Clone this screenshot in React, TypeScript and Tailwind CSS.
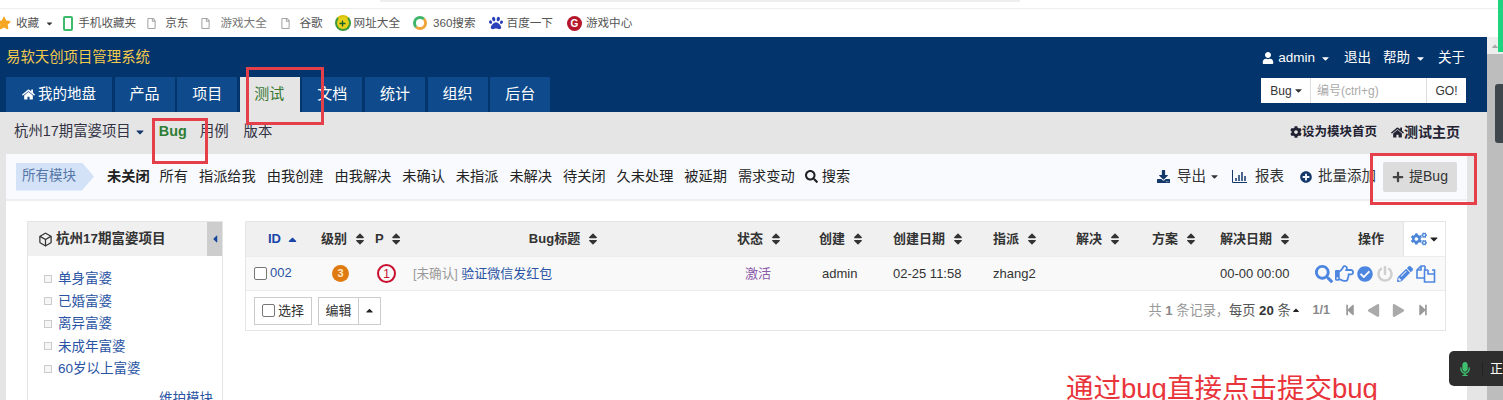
import {
  FaCaretDown,
  FaCaretUp,
  FaCaretLeft,
  FaCheckCircle,
  FaCog,
  FaCogs,
  FaDownload,
  FaHome,
  FaPencilAlt,
  FaPlay,
  FaPlus,
  FaPlusCircle,
  FaPowerOff,
  FaRegFile,
  FaRegHandPointRight,
  FaSearch,
  FaSort,
  FaStar,
  FaStepBackward,
  FaStepForward,
  FaUser,
  FaPaw,
  FaMicrophone,
} from 'react-icons/fa'
import { FiBox } from 'react-icons/fi'

const tabs = ['产品', '项目', '测试', '文档', '统计', '组织', '后台']

const filters = ['所有', '指派给我', '由我创建', '由我解决', '未确认', '未指派', '未解决', '待关闭', '久未处理', '被延期', '需求变动']

const modules = ['单身富婆', '已婚富婆', '离异富婆', '未成年富婆', '60岁以上富婆']

const gridCols = 'grid grid-cols-[67px_54px_35px_323px_82px_74px_100px_83px_76px_68px_102px_93px_42px]'

const headCols = [
  { label: '级别', cls: 'pl-[8px]' },
  { label: 'P', cls: 'pl-[8px]' },
  { label: 'Bug标题', cls: 'justify-center pl-[2px]' },
  { label: '状态', cls: 'pl-[12px]' },
  { label: '创建', cls: 'pl-[12px]' },
  { label: '创建日期', cls: 'pl-[12px]' },
  { label: '指派', cls: 'pl-[12px]' },
  { label: '解决', cls: 'pl-[12px]' },
  { label: '方案', cls: 'pl-[12px]' },
  { label: '解决日期', cls: 'pl-[12px]' },
]

function Page() {
  return <FaRegFile className="text-[11px] text-[#a5a5a5]" />
}

function Bookmarks() {
  return (
    <div className="flex h-[28px] items-center whitespace-nowrap bg-white text-[11.6px] text-[#555]">
      <FaStar className="ml-[-3px] text-[14px] text-[#f5a623]" />
      <span className="ml-[5px]">收藏</span>
      <FaCaretDown className="ml-[6px] text-[9px] text-[#333]" />
      <span className="ml-[9px] h-[15px] w-[10px] rounded-[2px] border-2 border-[#3dbb6c]" />
      <span className="ml-[5px]">手机收藏夹</span>
      <span className="ml-[10px] flex"><Page /></span>
      <span className="ml-[8px]">京东</span>
      <span className="ml-[12px] flex"><Page /></span>
      <span className="ml-[9px] w-[47px] text-[#777]">游戏大全</span>
      <span className="ml-[13px] flex"><Page /></span>
      <span className="ml-[8px]">谷歌</span>
      <span className="ml-[12px] flex h-[16px] w-[16px] items-center justify-center rounded-full border-2 border-[#3c9a3c] border-t-[#d9c20c] bg-[#e8cf1a] text-[#14602a]">
        <FaPlus className="text-[7px]" />
      </span>
      <span className="ml-[3px]">网址大全</span>
      <span className="ml-[13px] h-[14px] w-[14px] rounded-full border-[3px] border-[#3fb56a] border-r-[#f2a33a] border-b-[#f2a33a]" />
      <span className="ml-[6px]">360搜索</span>
      <FaPaw className="ml-[13px] text-[14px] text-[#2a3fb8]" />
      <span className="ml-[4px]">百度一下</span>
      <span className="ml-[14px] flex h-[15px] w-[15px] items-center justify-center rounded-full bg-[#b5162b] text-[10px] font-bold text-white">G</span>
      <span className="ml-[4px]">游戏中心</span>
    </div>
  )
}

function Header() {
  return (
    <div className="flex h-[75px] justify-between bg-[#03346b] pl-[6px]">
      <div className="flex flex-col justify-between">
        <div className="pt-[11px] text-[14.4px] leading-[18px] text-[#f2c94c]">易软天创项目管理系统</div>
        <div className="flex gap-[2.6px] text-[15px] text-white">
          <div className="flex h-[35px] w-[106px] items-center justify-center gap-[3px] bg-[#0f4b8c] text-[14.5px]">
            <FaHome className="text-[13px]" />
            <span>我的地盘</span>
          </div>
          {tabs.map((tab) =>
            tab === '测试' ? (
              <div key={tab} className="flex h-[35px] w-[60px] items-center justify-center bg-[#e5e5e5] pr-[1px] text-[#35782f]">
                {tab}
              </div>
            ) : (
              <div key={tab} className="flex h-[35px] w-[60px] items-center justify-center bg-[#0f4b8c]">
                {tab}
              </div>
            ),
          )}
        </div>
      </div>
      <div className="flex flex-col items-end pr-[21px] pt-[11px]">
        <div className="mr-[1px] flex h-[20px] items-center text-[13.5px] text-white">
          <FaUser className="text-[12px]" />
          <span className="ml-[4px]">admin</span>
          <FaCaretDown className="ml-[5px] text-[11px]" />
          <span className="ml-[13px]">退出</span>
          <span className="ml-[12px]">帮助</span>
          <FaCaretDown className="ml-[5px] text-[11px]" />
          <span className="ml-[12px]">关于</span>
        </div>
        <div className="mt-[10px] flex h-[25px] w-[205px] items-center bg-white text-[12px] text-[#333]">
          <div className="flex h-full w-[50px] items-center justify-center gap-[1px] border-r border-[#ddd] pl-[3px]">
            Bug<FaCaretDown className="text-[11px]" />
          </div>
          <div className="flex h-full w-[115px] items-center pl-[6px] text-[#aaa]">编号(ctrl+g)</div>
          <div className="flex h-full w-[40px] items-center justify-center border-l border-[#ddd]">GO!</div>
        </div>
      </div>
    </div>
  )
}

function SubNav() {
  return (
    <div className="flex h-[42px] items-center justify-between bg-[#e5e5e5] pb-[2px] pl-[14px] pr-[27px] text-[#334]">
      <div className="flex items-center text-[14.4px]">
        <span>杭州17期富婆项目</span>
        <FaCaretDown className="ml-[3px] text-[12px] text-[#14386a]" />
        <span className="ml-[13px] font-bold text-[#2e7d32]">Bug</span>
        <span className="ml-[13px]">用例</span>
        <span className="ml-[15px]">版本</span>
      </div>
      <div className="flex items-center font-bold text-[#223]">
        <FaCog className="text-[12px]" />
        <span className="text-[12.5px]">设为模块首页</span>
        <FaHome className="ml-[14px] text-[13px]" />
        <span className="text-[14px]">测试主页</span>
      </div>
    </div>
  )
}

function FeatureBar() {
  return (
    <div className="flex h-[47px] items-center justify-between border-b-2 border-[#eceef2] bg-[#f8fafe] pl-[10px] pr-[10px]">
      <div className="flex items-center text-[14.2px] text-[#222]">
        <div className="flex h-[28px] w-[78px] items-center bg-[#d3e2f6] pl-[6px] text-[13.5px] text-[#5577a8] [clip-path:polygon(0_0,66px_0,100%_50%,66px_100%,0_100%)]">
          所有模块
        </div>
        <span className="ml-[13px] font-bold">未关闭</span>
        <div className="ml-[10px] flex gap-[11px]">
          {filters.map((item) => (
            <span key={item}>{item}</span>
          ))}
        </div>
        <FaSearch className="ml-[10px] text-[13px]" />
        <span className="ml-[4px]">搜索</span>
      </div>
      <div className="flex items-center text-[14.5px] text-[#333]">
        <FaDownload className="text-[13px] text-[#14386a]" />
        <span className="ml-[7px]">导出</span>
        <FaCaretDown className="ml-[3px] text-[11px]" />
        <svg className="ml-[12px]" width="15" height="13" viewBox="0 0 15 13" fill="none" stroke="#14386a">
          <path d="M.5 0v12.5H15" />
          <path d="M4 11V8M7 11V5M10 11V2M13 11V6" strokeWidth="1.5" />
        </svg>
        <span className="ml-[8px]">报表</span>
        <FaPlusCircle className="ml-[16px] text-[12px] text-[#14386a]" />
        <span className="ml-[6px]">批量添加</span>
        <div className="ml-[7px] flex h-[30px] w-[74px] items-center justify-center gap-[5px] rounded-[2px] bg-[#dcdcdc] text-[14px]">
          <FaPlus className="text-[12px] text-[#444]" />
          <span>提Bug</span>
        </div>
      </div>
    </div>
  )
}

function Sidebar() {
  return (
    <div className="w-[196px] border border-[#e5e5e5] bg-white">
      <div className="flex h-[34px] items-center justify-between bg-[#f0f0f0]">
        <div className="flex items-center gap-[3px] pl-[10px] text-[13.5px] font-bold text-[#333]">
          <FiBox className="text-[15px] font-normal" />
          <span>杭州17期富婆项目</span>
        </div>
        <div className="flex h-full w-[15px] items-center justify-center bg-[#cdcdcd] text-[#14479c]">
          <FaCaretLeft className="text-[12px]" />
        </div>
      </div>
      <div className="flex flex-col gap-[5px] pl-[16px] pt-[14px] text-[13.5px] leading-[17.5px] text-[#2a54a3]">
        {modules.map((item) => (
          <div key={item} className="flex items-center gap-[6px]">
            <span className="h-[8px] w-[8px] border border-[#ccc] bg-[#f6f6f6]" />
            <span>{item}</span>
          </div>
        ))}
      </div>
      <div className="pr-[9px] pt-[11px] text-right text-[13.5px] text-[#2a54a3]">维护模块</div>
    </div>
  )
}

function BugTable() {
  return (
    <div className="h-[110px] w-[1201px] border border-[#e5e5e5] text-[13px] text-[#333]">
      <div className={`${gridCols} h-[34px] items-center bg-[#f0f0f0] font-bold`}>
        <div className="flex items-center gap-[5px] pl-[22px] text-[#1a44a8]">
          ID
          <FaCaretUp className="text-[13px]" />
        </div>
        {headCols.map((col) => (
          <div key={col.label} className={`flex items-center gap-[6px] ${col.cls}`}>
            {col.label}
            <FaSort className="text-[14px]" />
          </div>
        ))}
        <div className="pl-[48px]">操作</div>
        <div className="flex h-full items-center gap-[1px] border-l border-[#e5e5e5] bg-white pl-[7px]">
          <FaCogs className="text-[16px] text-[#4d86d8]" />
          <FaCaretDown className="text-[12px] text-[#222]" />
        </div>
      </div>
      <div className={`${gridCols} h-[35px] items-center border-y border-[#ececec] bg-[#f9f9f9]`}>
        <div className="flex items-center gap-[3px] pl-[8px] text-[#2a54a3]">
          <span className="h-[13px] w-[13px] rounded-[2px] border border-[#777] bg-white" />
          <span className="relative top-[-1px]">002</span>
        </div>
        <div className="pl-[19px]">
          <span className="flex h-[17px] w-[17px] items-center justify-center rounded-full bg-[#e07b12] text-[11px] font-bold text-[#ffe9c8]">3</span>
        </div>
        <div className="pl-[10px]">
          <span className="flex h-[19px] w-[19px] items-center justify-center rounded-full border-2 border-[#c8102e] text-[12px] text-[#c8102e]">1</span>
        </div>
        <div className="pl-[11px] text-[12.6px] text-[#999]">
          [未确认] <span className="text-[13px] text-[#2a54a3]">验证微信发红包</span>
        </div>
        <div className="pl-[20px] text-[#8a5aab]">激活</div>
        <div className="pl-[15px]">admin</div>
        <div className="pl-[12px]">02-25 11:58</div>
        <div className="pl-[12px]">zhang2</div>
        <div />
        <div />
        <div className="pl-[12px]">00-00 00:00</div>
        <div className="col-span-2 flex items-center pl-[5px] text-[#4d86e0]">
          <FaSearch className="text-[18px]" />
          <FaRegHandPointRight className="ml-[2px] text-[19px]" />
          <FaCheckCircle className="ml-[3px] text-[16px]" />
          <FaPowerOff className="ml-[4px] text-[16px] text-[#cfcfcf]" />
          <FaPencilAlt className="ml-[4px] text-[16px]" />
          <svg className="ml-[3px]" width="20" height="18" viewBox="0 0 20 18" fill="none" stroke="currentColor" strokeWidth="1.6">
            <path d="M9 1H5L1 5v8h7" />
            <path d="M5 1v4H1" />
            <path d="M12 5H8.5v12h10V5h-2.5" />
            <path d="M12 5v4h6.5" />
            <path d="M9 1v4" />
          </svg>
        </div>
      </div>
      <div className="flex h-[39px] items-center justify-between pl-[8px] pr-[16px]">
        <div className="flex items-center gap-[6px]">
          <div className="flex h-[28px] w-[58px] items-center justify-center gap-[3px] border border-[#ccc]">
            <span className="h-[13px] w-[13px] rounded-[2px] border border-[#777]" />
            选择
          </div>
          <div className="flex h-[28px] items-center border border-[#ccc]">
            <span className="flex h-full w-[40px] items-center justify-center border-r border-[#ccc]">编辑</span>
            <span className="flex w-[21px] justify-center"><FaCaretUp className="text-[11px] text-[#222]" /></span>
          </div>
        </div>
        <div className="flex items-center text-[13.2px] text-[#999]">
          <span>共 <b className="text-[#888]">1</b> 条记录，</span>
          <span className="text-[#555]">每页 <b className="text-[#333]">20</b> 条</span>
          <FaCaretUp className="text-[10px] text-[#222]" />
          <span className="ml-[12px] text-[12.5px] font-bold text-[#888]">1/1</span>
          <FaStepBackward className="ml-[14px] text-[12px] text-[#999]" />
          <FaPlay className="ml-[11px] text-[13px] text-[#aaa] [transform:scaleX(-1)]" />
          <FaPlay className="ml-[12px] text-[13px] text-[#aaa]" />
          <FaStepForward className="ml-[12px] text-[12px] text-[#999]" />
        </div>
      </div>
    </div>
  )
}

export default function App() {
  return (
    <div className="relative h-[400px] w-[1503px] overflow-hidden bg-white font-['Liberation_Sans','Noto_Sans_CJK_SC',sans-serif]">
      {/* browser chrome */}
      <div className="h-[9px] border-b border-[#eeeeee] bg-white">
        <div className="ml-[380px] h-[2px] w-[640px] bg-[#eeeeee]" />
      </div>
      <Bookmarks />

      <div className="flex h-[363px]">
        <div className="flex-1 bg-[#e5e5e5]">
          <Header />
          <SubNav />
          <div className="ml-[6px] mr-[20px] h-[246px] bg-white">
            <FeatureBar />
            <div className="flex gap-[22px] pl-[21px] pt-[20px]">
              <Sidebar />
              <BugTable />
            </div>
          </div>
        </div>
        <div className="w-[16px] bg-[#bdbdbd]">
          <div className="flex h-[17px] justify-center bg-[#eeeeee] pt-[4px]">
            <FaCaretUp className="text-[10px] text-[#aaa]" />
          </div>
        </div>
      </div>

      {/* overlays: scrollbar marks, annotations, voice widget */}
      <div className="absolute right-0 top-0 h-[52px] w-[5px] bg-[#1ed47e]" />
      <div className="absolute right-0 top-[84px] h-[59px] w-[8px] rounded-l-[3px] bg-[#3f474c]" />
      <div className="absolute left-[246px] top-[67px] h-[58px] w-[78px] border-[3px] border-[#e5404a]" />
      <div className="absolute left-[152px] top-[118px] h-[46px] w-[56px] border-[3px] border-[#e5404a]" />
      <div className="absolute left-[1370px] top-[153px] h-[52px] w-[107px] border-[3px] border-[#e5404a]" />
      <div className="absolute left-[1066px] top-[370px] whitespace-nowrap text-[27.5px] leading-[38px] text-[#e8343a]">通过bug直接点击提交bug</div>
      <div className="absolute left-[1449px] top-[351px] flex h-[35px] w-[54px] items-center rounded-l-[5px] bg-[#2e2e2e] text-[13px] text-white">
        <span className="flex w-[35px] justify-center border-r border-[#222]">
          <FaMicrophone className="text-[14px] text-[#3fbf6f]" />
        </span>
        <span className="ml-[7px]">正</span>
      </div>
    </div>
  )
}
